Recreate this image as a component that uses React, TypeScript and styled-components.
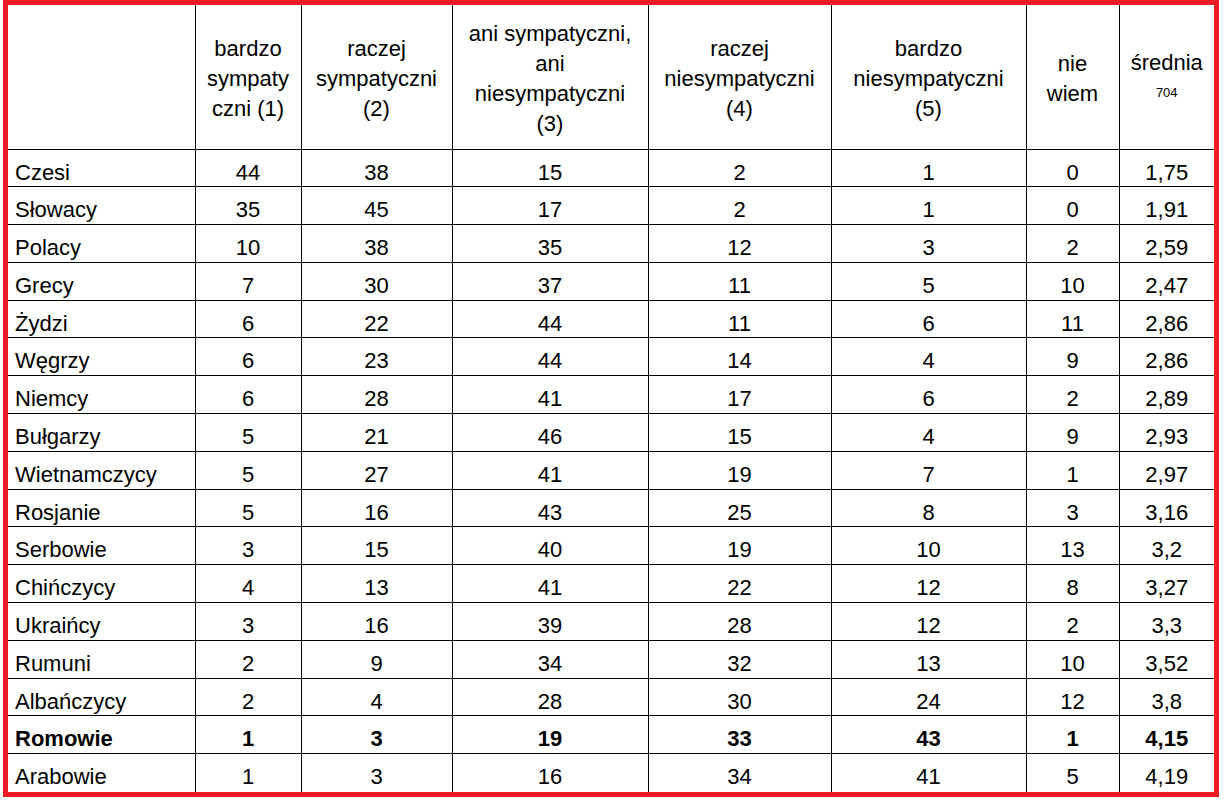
import React from "react";
import styled, { createGlobalStyle } from "styled-components";

type Row = {
  name: string;
  values: string[];
  bold?: boolean;
};

const columns = [187, 106, 151, 196, 183, 195, 93, 95];

const rows: Row[] = [
  { name: "Czesi", values: ["44", "38", "15", "2", "1", "0", "1,75"] },
  { name: "Słowacy", values: ["35", "45", "17", "2", "1", "0", "1,91"] },
  { name: "Polacy", values: ["10", "38", "35", "12", "3", "2", "2,59"] },
  { name: "Grecy", values: ["7", "30", "37", "11", "5", "10", "2,47"] },
  { name: "Żydzi", values: ["6", "22", "44", "11", "6", "11", "2,86"] },
  { name: "Węgrzy", values: ["6", "23", "44", "14", "4", "9", "2,86"] },
  { name: "Niemcy", values: ["6", "28", "41", "17", "6", "2", "2,89"] },
  { name: "Bułgarzy", values: ["5", "21", "46", "15", "4", "9", "2,93"] },
  { name: "Wietnamczycy", values: ["5", "27", "41", "19", "7", "1", "2,97"] },
  { name: "Rosjanie", values: ["5", "16", "43", "25", "8", "3", "3,16"] },
  { name: "Serbowie", values: ["3", "15", "40", "19", "10", "13", "3,2"] },
  { name: "Chińczycy", values: ["4", "13", "41", "22", "12", "8", "3,27"] },
  { name: "Ukraińcy", values: ["3", "16", "39", "28", "12", "2", "3,3"] },
  { name: "Rumuni", values: ["2", "9", "34", "32", "13", "10", "3,52"] },
  { name: "Albańczycy", values: ["2", "4", "28", "30", "24", "12", "3,8"] },
  { name: "Romowie", values: ["1", "3", "19", "33", "43", "1", "4,15"], bold: true },
  { name: "Arabowie", values: ["1", "3", "16", "34", "41", "5", "4,19"] },
];

const App: React.FC = () => {
  return (
    <>
      <GlobalStyle />
      <Frame>
        <Table>
          <colgroup>
            {columns.map((w, i) => (
              <col key={i} style={{ width: w }} />
            ))}
          </colgroup>
          <thead>
            <HeadRow>
              <HeadCell />
              <HeadCell>
                bardzo
                <br />
                sympaty
                <br />
                czni (1)
              </HeadCell>
              <HeadCell>
                raczej
                <br />
                sympatyczni
                <br />
                (2)
              </HeadCell>
              <HeadCell>
                ani sympatyczni,
                <br />
                ani
                <br />
                niesympatyczni
                <br />
                (3)
              </HeadCell>
              <HeadCell>
                raczej
                <br />
                niesympatyczni
                <br />
                (4)
              </HeadCell>
              <HeadCell>
                bardzo
                <br />
                niesympatyczni
                <br />
                (5)
              </HeadCell>
              <HeadCell>
                nie
                <br />
                wiem
              </HeadCell>
              <HeadCell>
                średnia
                <br />
                <Note>704</Note>
              </HeadCell>
            </HeadRow>
          </thead>
          <tbody>
            {rows.map((row) => (
              <DataRow key={row.name}>
                <Cell $first $bold={row.bold}>
                  {row.name}
                </Cell>
                {row.values.map((v, i) => (
                  <Cell key={i} $bold={row.bold}>
                    {v}
                  </Cell>
                ))}
              </DataRow>
            ))}
          </tbody>
        </Table>
      </Frame>
    </>
  );
};

const GlobalStyle = createGlobalStyle`
  body {
    margin: 0;
    background: #ffffff;
    font-family: "Liberation Sans", Arial, sans-serif;
    color: #000000;
  }
`;

const Frame = styled.div`
  width: 1206px;
  margin-left: 3px;
  border: 5px solid #ed1c24;
  background: #ffffff;
`;

const Table = styled.table`
  width: 1206px;
  table-layout: fixed;
  border-collapse: collapse;
  border-style: hidden;
  font-size: 22px;
`;

const HeadRow = styled.tr`
  height: 144px;
`;

const HeadCell = styled.th`
  border: 1px solid #000000;
  padding: 4px 4px 0;
  font-weight: normal;
  text-align: center;
  vertical-align: middle;
  line-height: 30px;
`;

const Note = styled.span`
  font-size: 13px;
  vertical-align: 4px;
`;

const DataRow = styled.tr`
  height: 37.8px;
`;

const Cell = styled.td<{ $first?: boolean; $bold?: boolean }>`
  border: 1px solid #000000;
  padding: 12px 6px 0 ${(p) => (p.$first ? "7px" : "6px")};
  text-align: ${(p) => (p.$first ? "left" : "center")};
  font-weight: ${(p) => (p.$bold ? "bold" : "normal")};
  vertical-align: top;
  line-height: 22px;
  white-space: nowrap;
`;

export default App;
